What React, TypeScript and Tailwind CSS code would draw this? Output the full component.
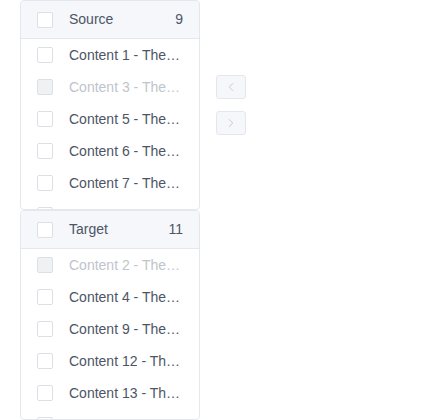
import { ChevronLeft, ChevronRight } from 'lucide-react'

type Item = { label: string; disabled?: boolean }

const source: Item[] = [
  { label: 'Content 1 - The quick brown fox' },
  { label: 'Content 3 - The quick brown fox', disabled: true },
  { label: 'Content 5 - The quick brown fox' },
  { label: 'Content 6 - The quick brown fox' },
  { label: 'Content 7 - The quick brown fox' },
  { label: 'Content 8 - The quick brown fox' },
]

const target: Item[] = [
  { label: 'Content 2 - The quick brown fox', disabled: true },
  { label: 'Content 4 - The quick brown fox' },
  { label: 'Content 9 - The quick brown fox' },
  { label: 'Content 12 - The quick brown fox' },
  { label: 'Content 13 - The quick brown fox' },
  { label: 'Content 14 - The quick brown fox' },
]

function Box({ disabled }: { disabled?: boolean }) {
  return (
    <span
      className={
        'w-4 h-4 shrink-0 rounded-[2px] border border-[#dcdfe6] ' +
        (disabled ? 'bg-[#f0f1f3]' : 'bg-white')
      }
    />
  )
}

function Panel({ title, count, items }: { title: string; count: number; items: Item[] }) {
  return (
    <div className="w-[180px] h-[210px] border border-[#e4e7ed] rounded-[4px] bg-white overflow-hidden flex flex-col">
      {/* header */}
      <div className="h-[38px] shrink-0 flex items-center pl-4 pr-4 bg-[#f5f7fa] border-b border-[#e4e7ed] text-[14px] text-[#4d5566]">
        <Box />
        <span className="ml-4 flex-1">{title}</span>
        <span>{count}</span>
      </div>
      {/* list */}
      <div className="flex-1 overflow-hidden">
        {items.map(it => (
          <div key={it.label} className="h-[32px] flex items-center pl-4 pr-4">
            <Box disabled={it.disabled} />
            <span
              className={
                'ml-4 truncate text-[14px] ' +
                (it.disabled ? 'text-[#c0c4cc]' : 'text-[#4d5566]')
              }
            >
              {it.label}
            </span>
          </div>
        ))}
      </div>
    </div>
  )
}

export default function App() {
  return (
    <div className="w-[426px] h-[420px] bg-white pl-5 font-['Liberation_Sans',Arial,sans-serif]">
      <div className="flex items-center">
        <Panel title="Source" count={9} items={source} />
        <div className="ml-4 flex flex-col gap-3">
          <button className="w-[30px] h-6 flex items-center justify-center rounded-[3px] border border-[#e4e7ed] bg-[#f5f7fa] text-[#c0c4cc]">
            <ChevronLeft size={14} strokeWidth={1.5} />
          </button>
          <button className="w-[30px] h-6 flex items-center justify-center rounded-[3px] border border-[#e4e7ed] bg-[#f5f7fa] text-[#c0c4cc]">
            <ChevronRight size={14} strokeWidth={1.5} />
          </button>
        </div>
      </div>
      <Panel title="Target" count={11} items={target} />
    </div>
  )
}
